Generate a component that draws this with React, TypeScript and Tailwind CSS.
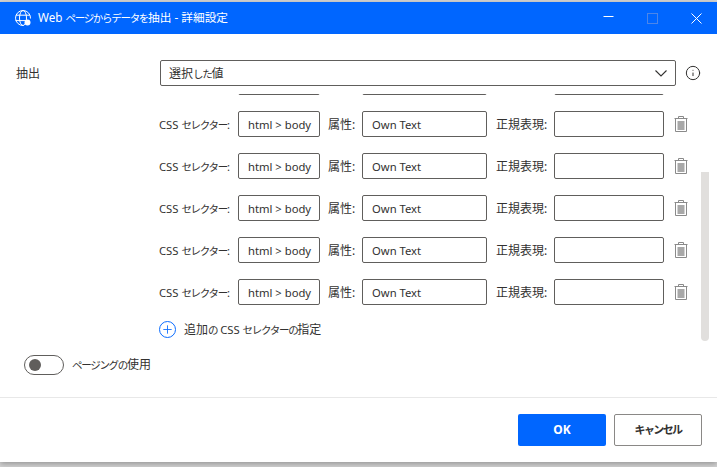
import { useState, type ReactNode } from "react";
import { Info, Plus } from "lucide-react";

const FONT = "font-['Noto_Sans','Noto_Sans_CJK_JP',sans-serif]";

// kana are narrow in the original UI font
function K({ children }: { children: ReactNode }) {
  return <span className="text-[10.5px] tracking-[-1.3px]">{children}</span>;
}

function TrashIcon() {
  return (
    <svg width="14" height="16" viewBox="0 0 14 16" fill="none">
      <path d="M0.5 2.5H13.5" stroke="#8a8a8a" />
      <path d="M4.5 2.5V0.5H9.5V2.5" stroke="#8a8a8a" />
      <path d="M1.5 2.5V15.5H12.5V2.5" stroke="#8a8a8a" />
      <rect x="3.5" y="5" width="7" height="9" fill="#a8a8a8" />
    </svg>
  );
}

function GlobeIcon() {
  return (
    <svg width="18" height="18" viewBox="0 0 18 18" fill="none" stroke="white" strokeWidth="1">
      <path d="M9.5 16.5A7.5 7.5 0 1 1 16.5 9.5" />
      <ellipse cx="9" cy="9" rx="3.5" ry="7.5" />
      <path d="M2 6.2H16M1.6 11.6H12" />
      <circle cx="13.5" cy="13.5" r="3" fill="white" stroke="none" />
    </svg>
  );
}

function SelectorRow() {
  return (
    <div className="flex items-center h-[26px] text-[11.25px] text-[#323130]">
      <span className="w-[79px] pt-[2px] whitespace-nowrap">
        CSS <K>セレクター</K>:
      </span>
      <div className="w-[82px] h-[26px] border border-[#605e5c] rounded-[2px] pl-[9px] pt-[2px] flex items-center overflow-hidden whitespace-nowrap">
        html &gt; body
      </div>
      <span className="w-[34px] ml-[8px] pt-[2px] text-[12px] whitespace-nowrap">属性:</span>
      <div className="w-[125px] h-[26px] border border-[#605e5c] rounded-[2px] pl-[9px] pt-[2px] flex items-center">
        Own Text
      </div>
      <span className="w-[58px] ml-[9px] pt-[2px] text-[12px] whitespace-nowrap">正規表現:</span>
      <div className="w-[110px] h-[26px] border border-[#605e5c] rounded-[2px]" />
      <div className="ml-[10px] flex items-center">
        <TrashIcon />
      </div>
    </div>
  );
}

export default function App() {
  const [paging, setPaging] = useState(false);

  return (
    <div className={`${FONT} w-[717px] h-[467px] bg-[#d4d4d4] overflow-hidden pt-[2px]`}>
      <div className="h-[460px] bg-white flex flex-col shadow-[0_2px_6px_rgba(0,0,0,0.3)]">
        {/* title bar */}
        <div className="h-[32px] shrink-0 bg-[#0066ff] flex items-center text-white">
          <div className="ml-[14px] mr-[6px] flex">
            <GlobeIcon />
          </div>
          <span className="text-[11.7px] whitespace-nowrap">
            Web <K>ページからデータを</K>抽出 - 詳細設定
          </span>
          <div className="ml-auto mr-[-1px] flex items-center">
            <div className="w-[44px] flex justify-center">
              <svg width="11" height="11" viewBox="0 0 11 11" stroke="white" fill="none">
                <path d="M0.5 3.5H10.5" />
              </svg>
            </div>
            <div className="w-[44px] flex justify-center">
              <svg width="11" height="11" viewBox="0 0 11 11" stroke="#4d86e8" fill="none">
                <rect x="0.5" y="0.5" width="10" height="10" />
              </svg>
            </div>
            <div className="w-[44px] flex justify-center">
              <svg width="11" height="11" viewBox="0 0 11 11" stroke="white" fill="none">
                <path d="M0.5 0.5L10.5 10.5M10.5 0.5L0.5 10.5" />
              </svg>
            </div>
          </div>
        </div>

        {/* extract dropdown */}
        <div className="flex items-center h-[26px] mt-[26px] shrink-0 text-[12px] text-[#323130]">
          <span className="w-[160px] pl-[16px] pt-[1px]">抽出</span>
          <div className="w-[516px] h-[26px] border border-[#605e5c] rounded-[2px] pl-[8px] pr-[8px] flex items-center justify-between">
            <span className="pt-[1px]">
              選択<K>した</K>値
            </span>
            <svg width="12" height="7" viewBox="0 0 12 7" fill="none" stroke="#323130" strokeWidth="1.1">
              <path d="M0.5 0.5L6 6L11.5 0.5" />
            </svg>
          </div>
          <Info size={16} strokeWidth={1.5} className="ml-[9px] text-[#323130]" />
        </div>

        {/* selector list */}
        <div className="relative h-[250px] mt-[8px] shrink-0 overflow-hidden">
          <div className="pl-[159px] mt-[-25px] flex flex-col gap-[16px]">
            <SelectorRow />
            <SelectorRow />
            <SelectorRow />
            <SelectorRow />
            <SelectorRow />
            <SelectorRow />
            <button className="flex items-center gap-[8px] h-[18px] mt-[-1px] text-[11.25px] text-[#323130]">
              <span className="w-[17px] h-[17px] rounded-full border-[1.5px] border-[#0a6cff] flex items-center justify-center">
                <Plus size={13} strokeWidth={1.6} className="text-[#0a6cff]" />
              </span>
              <span className="pt-[1px]">
                <span className="text-[12px]">追加</span>
                <K>の</K> CSS <K>セレクターの</K>
                <span className="text-[12px]">指定</span>
              </span>
            </button>
          </div>
          <div className="absolute left-[701px] top-[78px] w-[8px] h-[169px] bg-[#e1dfdd] rounded-b-[4px]" />
        </div>

        {/* paging toggle */}
        <div className="flex items-center h-[20px] mt-[11px] ml-[24px] shrink-0 gap-[8px] text-[12px] text-[#323130]">
          <button
            onClick={() => setPaging(!paging)}
            className="w-[40px] h-[20px] rounded-full border border-[#605e5c] flex items-center pl-[4px]"
          >
            <span className="w-[12px] h-[12px] rounded-full bg-[#605e5c]" />
          </button>
          <span>
            <K>ページングの</K>使用
          </span>
        </div>

        {/* footer */}
        <div className="mt-[22px] border-t border-[#e8e8e8] flex-1 flex items-center justify-end gap-[8px] pr-[15px]">
          <button className="w-[88px] h-[32px] bg-[#0066ff] rounded-[2px] text-white text-[12px] font-bold">OK</button>
          <button className="w-[88px] h-[32px] border border-[#8a8886] rounded-[2px] text-[11px] tracking-[-1.6px] font-semibold text-[#323130]">
            キャンセル
          </button>
        </div>
      </div>
    </div>
  );
}
